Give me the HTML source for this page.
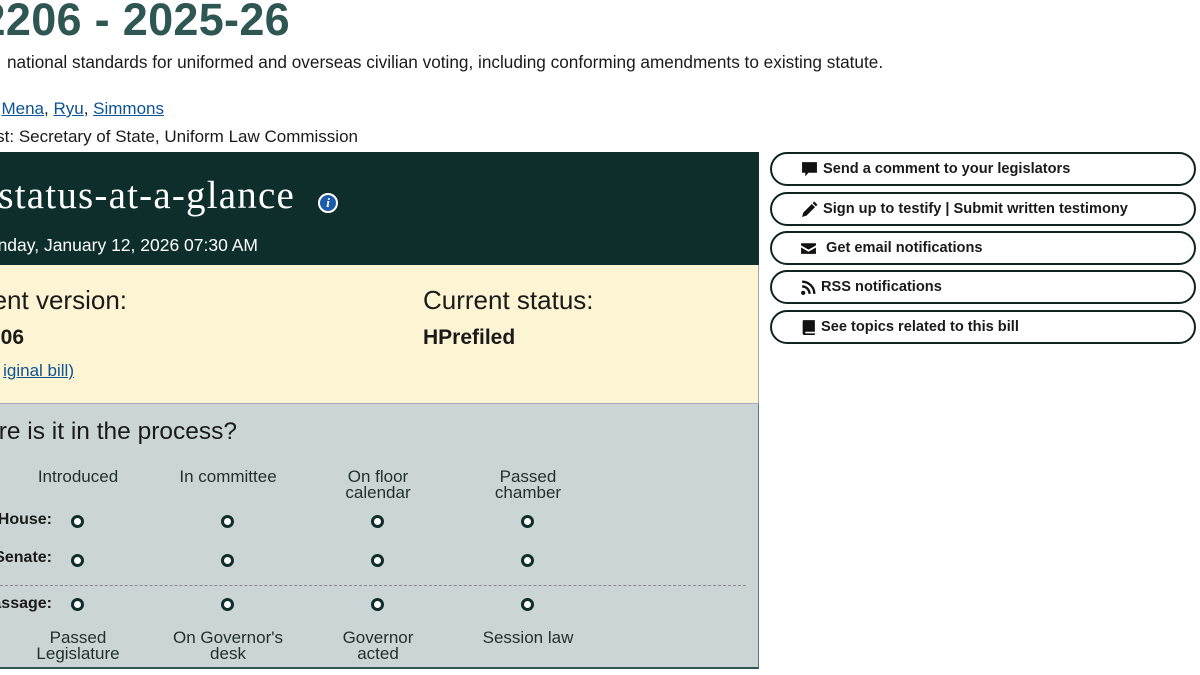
<!DOCTYPE html>
<html><head><meta charset="utf-8"><style>
*{margin:0;padding:0;box-sizing:border-box}
body{width:1200px;height:675px;overflow:hidden;background:#fff;font-family:"Liberation Sans",sans-serif;color:#1a1a1a;position:relative}
.a{position:absolute;white-space:nowrap}
.r{position:absolute;white-space:nowrap;text-align:right}
a{color:#0b5394;text-decoration:underline}
.btn{position:absolute;left:770px;width:426px;height:34px;border:2px solid #0d2420;border-radius:17px;font-weight:bold;font-size:14.6px;line-height:30px;color:#1a1a1a}
.btn svg{position:absolute;top:7px}
.btn span{position:absolute;top:0}
.dot{position:absolute;width:13px;height:13px;border:3.5px solid #0d2e2b;border-radius:50%;background:#fff}
.lbl{position:absolute;width:150px;text-align:center;font-size:17px;line-height:16px;color:#1f2f2f}
.rl{position:absolute;right:1148px;font-weight:bold;font-size:16px;white-space:nowrap}
</style></head><body>
<div class="r" style="right:910px;top:-6px;font-size:45px;font-weight:bold;color:#2e5652;letter-spacing:0.3px">2206 - 2025-26</div>
<div class="a" style="left:7px;top:52px;font-size:17.2px">national standards for uniformed and overseas civilian voting, including conforming amendments to existing statute.</div>
<div class="r" style="right:1036px;top:99px;font-size:17px">: <a>Mena</a>, <a>Ryu</a>, <a>Simmons</a></div>
<div class="r" style="right:842px;top:127px;font-size:17px">st: Secretary of State, Uniform Law Commission</div>

<div style="position:absolute;left:0;top:152px;width:759px;height:113px;background:#0d2e2b"></div>
<div style="position:absolute;left:0;top:265px;width:759px;height:138px;background:#fdf4d3;border-right:1px solid #9aa"></div>
<div style="position:absolute;left:0;top:403px;width:759px;height:266px;background:#ccd5d5;border-top:1px solid #aab;border-right:1px solid #577;border-bottom:2px solid #2e5652"></div>

<div class="r" style="right:905px;top:173px;font-family:'Liberation Serif',serif;font-size:39px;color:#fff;letter-spacing:1.2px">status-at-a-glance</div>
<div class="a" style="left:318px;top:193px;width:20px;height:20px;border-radius:50%;background:#1d5ba8;border:2px solid #fff;color:#fff;font:italic bold 13px 'Liberation Serif',serif;text-align:center;line-height:16px">i</div>
<div class="r" style="right:942px;top:235px;font-size:17.5px;color:#fff">onday, January 12, 2026 07:30 AM</div>

<div class="r" style="right:1073px;top:285px;font-size:26px">ent version:</div>
<div class="a" style="left:423px;top:285px;font-size:26px">Current status:</div>
<div class="r" style="right:1176px;top:326px;font-size:21px;font-weight:bold">06</div>
<div class="a" style="left:423px;top:326px;font-size:21px;font-weight:bold">HPrefiled</div>
<div class="r" style="right:1126px;top:361px;font-size:17px"><a>iginal bill)</a></div>

<div class="r" style="right:963px;top:418px;font-size:24.5px">re is it in the process?</div>
<div class="lbl" style="left:3px;top:469px">Introduced</div>
<div class="lbl" style="left:153px;top:469px">In committee</div>
<div class="lbl" style="left:303px;top:469px">On floor<br>calendar</div>
<div class="lbl" style="left:453px;top:469px">Passed<br>chamber</div>
<div class="rl" style="top:511px">House:</div>
<div class="rl" style="top:549px">Senate:</div>
<div class="rl" style="top:595px">assage:</div>
<div style="position:absolute;left:0;top:585px;width:746px;border-top:1px dashed #889"></div>
<div class="dot" style="left:71px;top:515px"></div><div class="dot" style="left:221px;top:515px"></div><div class="dot" style="left:371px;top:515px"></div><div class="dot" style="left:521px;top:515px"></div>
<div class="dot" style="left:71px;top:554px"></div><div class="dot" style="left:221px;top:554px"></div><div class="dot" style="left:371px;top:554px"></div><div class="dot" style="left:521px;top:554px"></div>
<div class="dot" style="left:71px;top:598px"></div><div class="dot" style="left:221px;top:598px"></div><div class="dot" style="left:371px;top:598px"></div><div class="dot" style="left:521px;top:598px"></div>
<div class="lbl" style="left:3px;top:630px">Passed<br>Legislature</div>
<div class="lbl" style="left:153px;top:630px">On Governor's<br>desk</div>
<div class="lbl" style="left:303px;top:630px">Governor<br>acted</div>
<div class="lbl" style="left:453px;top:630px">Session law</div>

<div class="btn" style="top:152px"><svg style="left:29px" width="17" height="17" viewBox="0 0 16 16"><path d="M1 1h14v10H7l-3 3.5V11H1z" fill="#111"/></svg><span style="left:51px">Send a comment to your legislators</span></div>
<div class="btn" style="top:192px"><svg style="left:29px" width="17" height="17" viewBox="0 0 16 16"><path d="M1 15l1.2-4.2 8-8 3 3-8 8zM11 2l1.5-1.5 3 3L14 5z" fill="#111"/></svg><span style="left:51px">Sign up to testify | Submit written testimony</span></div>
<div class="btn" style="top:231px"><svg style="left:28px" width="17" height="17" viewBox="0 0 16 16"><path d="M1 3h14v2L8 9 1 5z M1 7l7 4 7-4v6H1z" fill="#111"/></svg><span style="left:54px">Get email notifications</span></div>
<div class="btn" style="top:270px"><svg style="left:28px" width="17" height="17" viewBox="0 0 16 16"><circle cx="3" cy="13" r="2" fill="#111"/><path d="M2 7a7 7 0 0 1 7 7M2 2.5a11.5 11.5 0 0 1 11.5 11.5" stroke="#111" stroke-width="2.2" fill="none"/></svg><span style="left:49px">RSS notifications</span></div>
<div class="btn" style="top:310px"><svg style="left:28px" width="17" height="17" viewBox="0 0 16 16"><path d="M3 1h11v11H5v1.5h9V15H4a1.5 1.5 0 0 1-1.5-1.5V2z" fill="#111"/></svg><span style="left:49px">See topics related to this bill</span></div>
</body></html>
